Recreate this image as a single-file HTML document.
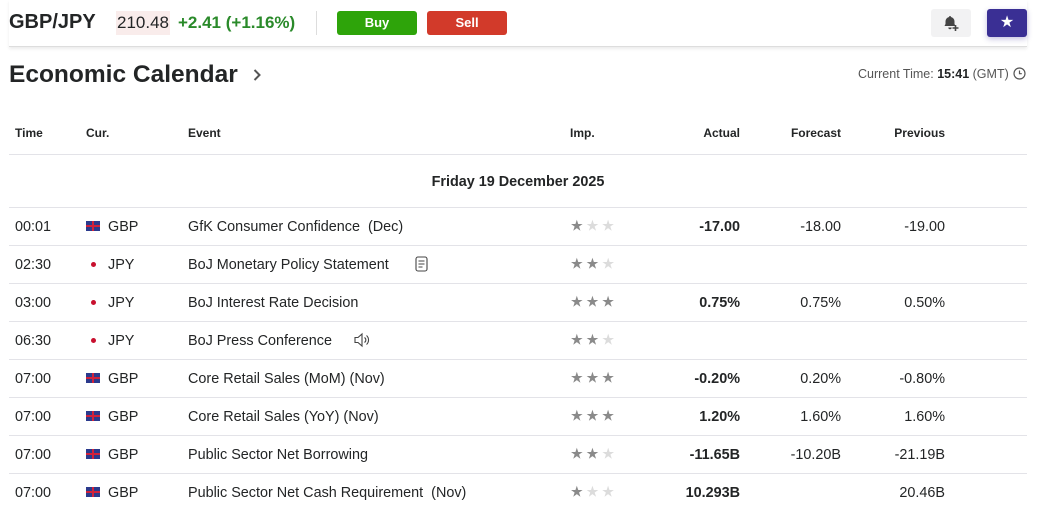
<!DOCTYPE html>
<html><head><meta charset="utf-8"><style>
*{margin:0;padding:0;box-sizing:border-box}
body{width:1045px;height:510px;overflow:hidden;background:#fff;font-family:"Liberation Sans",sans-serif;color:#232526;position:relative}
.a{position:absolute;white-space:nowrap}
.hdr{position:absolute;left:9px;top:0;width:1018px;height:47px;border-bottom:1px solid #ddd;box-shadow:0 2px 3px rgba(0,0,0,.08)}
.btn{position:absolute;top:11px;height:24px;border-radius:3px;color:#fff;font-size:13px;font-weight:bold;text-align:center;line-height:24px}
.row{position:absolute;left:9px;width:1018px;height:38px;border-top:1px solid #e3e3e8;font-size:14.4px}
.row span{position:absolute;top:11px}
.r{text-align:right}
.st{position:absolute;top:10px;left:562px;font-size:13px;letter-spacing:4px}
.f{color:#8a8a8a}.e{color:#dcdcdc}
.flag{position:absolute;left:77px;top:13px;width:14px;height:10px;background:#2b3a8c}
.flag:before{content:"";position:absolute;left:0;top:4px;width:14px;height:2px;background:#d0213b}
.flag:after{content:"";position:absolute;left:6px;top:0;width:2px;height:10px;background:#d0213b}
.dot{position:absolute;left:82px;top:16px;width:5px;height:5px;border-radius:50%;background:#c8102e}
</style></head><body>
<div class="hdr"></div>
<div class="a" style="left:9px;top:11px;font-size:20px;font-weight:bold">GBP/JPY</div>
<div class="a" style="left:116px;top:11px;height:24px;line-height:24px;padding:0 1px;background:#f9eceb;font-size:17px">210.48</div>
<div class="a" style="left:178px;top:11px;line-height:24px;font-size:17px;color:#2a8a2a;font-weight:bold">+2.41 (+1.16%)</div>
<div class="a" style="left:316px;top:11px;width:1px;height:24px;background:#ddd"></div>
<div class="btn" style="left:337px;width:80px;background:#2ea40a">Buy</div>
<div class="btn" style="left:427px;width:80px;background:#d23a2a">Sell</div>
<div class="a" style="left:931px;top:9px;width:40px;height:28px;background:#f2f2f3;border-radius:3px;text-align:center">
<svg width="18" height="18" viewBox="0 0 18 18" style="margin-top:5px"><path d="M8 2a1 1 0 0 1 1 1 4.5 4.5 0 0 1 3.5 4.5v2.5l1 2H2.5l1-2V7.5A4.5 4.5 0 0 1 7 3a1 1 0 0 1 1-1zM6.3 13.5a1.7 1.7 0 0 0 3.4 0z" fill="#444"/><path d="M13.5 11v6M10.5 14h6" stroke="#444" stroke-width="1.6"/></svg></div>
<div class="a" style="left:987px;top:9px;width:40px;height:28px;background:#3a2f94;border-radius:3px;text-align:center;color:#fff;font-size:16px;line-height:28px;box-shadow:0 2px 6px rgba(58,47,148,.3)">★</div>
<div class="a" style="left:9px;top:61px;font-size:24.5px;font-weight:bold">Economic Calendar</div>
<svg class="a" style="left:252px;top:68px" width="10" height="14" viewBox="0 0 10 14"><path d="M2.5 2l5 5-5 5" fill="none" stroke="#555" stroke-width="2"/></svg>
<div class="a" style="left:858px;top:67px;font-size:12.5px;color:#555">Current Time: <b style="color:#232526">15:41</b> (GMT)</div>
<svg class="a" style="left:1013px;top:67px" width="13" height="13" viewBox="0 0 13 13"><circle cx="6.5" cy="6.5" r="5.5" fill="none" stroke="#555" stroke-width="1.2"/><path d="M6.5 3.5v3.2h2.3" fill="none" stroke="#555" stroke-width="1.2"/></svg>
<div class="a" style="left:15px;top:126px;font-size:12px;font-weight:bold">Time</div>
<div class="a" style="left:86px;top:126px;font-size:12px;font-weight:bold">Cur.</div>
<div class="a" style="left:188px;top:126px;font-size:12px;font-weight:bold">Event</div>
<div class="a" style="left:570px;top:126px;font-size:12px;font-weight:bold">Imp.</div>
<div class="a r" style="left:640px;width:100px;top:126px;font-size:12px;font-weight:bold">Actual</div>
<div class="a r" style="left:741px;width:100px;top:126px;font-size:12px;font-weight:bold">Forecast</div>
<div class="a r" style="left:845px;width:100px;top:126px;font-size:12px;font-weight:bold">Previous</div>
<div class="row" style="top:154px;height:53px"><span style="left:0;width:1018px;text-align:center;top:19px;font-weight:bold">Friday 19 December 2025</span></div>

<div class="row" style="top:207px"><span style="left:6px">00:01</span><i class="flag"></i><span style="left:99px">GBP</span><span style="left:179px">GfK Consumer Confidence&nbsp; (Dec)</span><div class="st"><b class="f">★</b><b class="e">★★</b></div><span class="r" style="left:631px;width:100px;font-weight:bold">-17.00</span><span class="r" style="left:732px;width:100px">-18.00</span><span class="r" style="left:836px;width:100px">-19.00</span></div>
<div class="row" style="top:245px"><span style="left:6px">02:30</span><i class="dot"></i><span style="left:99px">JPY</span><span style="left:179px">BoJ Monetary Policy Statement</span><svg style="position:absolute;left:406px;top:10px" width="13" height="16" viewBox="0 0 13 16"><rect x="1" y="1" width="11" height="14" rx="2" fill="none" stroke="#444" stroke-width="1.1"/><path d="M3.5 5h6M3.5 8h6M3.5 11h4" stroke="#444" stroke-width="1.1"/></svg><div class="st"><b class="f">★★</b><b class="e">★</b></div></div>
<div class="row" style="top:283px"><span style="left:6px">03:00</span><i class="dot"></i><span style="left:99px">JPY</span><span style="left:179px">BoJ Interest Rate Decision</span><div class="st"><b class="f">★★★</b></div><span class="r" style="left:631px;width:100px;font-weight:bold">0.75%</span><span class="r" style="left:732px;width:100px">0.75%</span><span class="r" style="left:836px;width:100px">0.50%</span></div>
<div class="row" style="top:321px"><span style="left:6px">06:30</span><i class="dot"></i><span style="left:99px">JPY</span><span style="left:179px">BoJ Press Conference</span><svg style="position:absolute;left:344px;top:10px" width="18" height="16" viewBox="0 0 18 16"><path d="M2 5.5h3l4-3.5v12l-4-3.5H2z" fill="none" stroke="#444" stroke-width="1.1"/><path d="M11.5 5.5a3 3 0 0 1 0 5M13.5 3.5a6 6 0 0 1 0 9" fill="none" stroke="#444" stroke-width="1.1"/></svg><div class="st"><b class="f">★★</b><b class="e">★</b></div></div>
<div class="row" style="top:359px"><span style="left:6px">07:00</span><i class="flag"></i><span style="left:99px">GBP</span><span style="left:179px">Core Retail Sales (MoM) (Nov)</span><div class="st"><b class="f">★★★</b></div><span class="r" style="left:631px;width:100px;font-weight:bold">-0.20%</span><span class="r" style="left:732px;width:100px">0.20%</span><span class="r" style="left:836px;width:100px">-0.80%</span></div>
<div class="row" style="top:397px"><span style="left:6px">07:00</span><i class="flag"></i><span style="left:99px">GBP</span><span style="left:179px">Core Retail Sales (YoY) (Nov)</span><div class="st"><b class="f">★★★</b></div><span class="r" style="left:631px;width:100px;font-weight:bold">1.20%</span><span class="r" style="left:732px;width:100px">1.60%</span><span class="r" style="left:836px;width:100px">1.60%</span></div>
<div class="row" style="top:435px"><span style="left:6px">07:00</span><i class="flag"></i><span style="left:99px">GBP</span><span style="left:179px">Public Sector Net Borrowing</span><div class="st"><b class="f">★★</b><b class="e">★</b></div><span class="r" style="left:631px;width:100px;font-weight:bold">-11.65B</span><span class="r" style="left:732px;width:100px">-10.20B</span><span class="r" style="left:836px;width:100px">-21.19B</span></div>
<div class="row" style="top:473px"><span style="left:6px">07:00</span><i class="flag"></i><span style="left:99px">GBP</span><span style="left:179px">Public Sector Net Cash Requirement&nbsp; (Nov)</span><div class="st"><b class="f">★</b><b class="e">★★</b></div><span class="r" style="left:631px;width:100px;font-weight:bold">10.293B</span><span class="r" style="left:836px;width:100px">20.46B</span></div>
</body></html>
